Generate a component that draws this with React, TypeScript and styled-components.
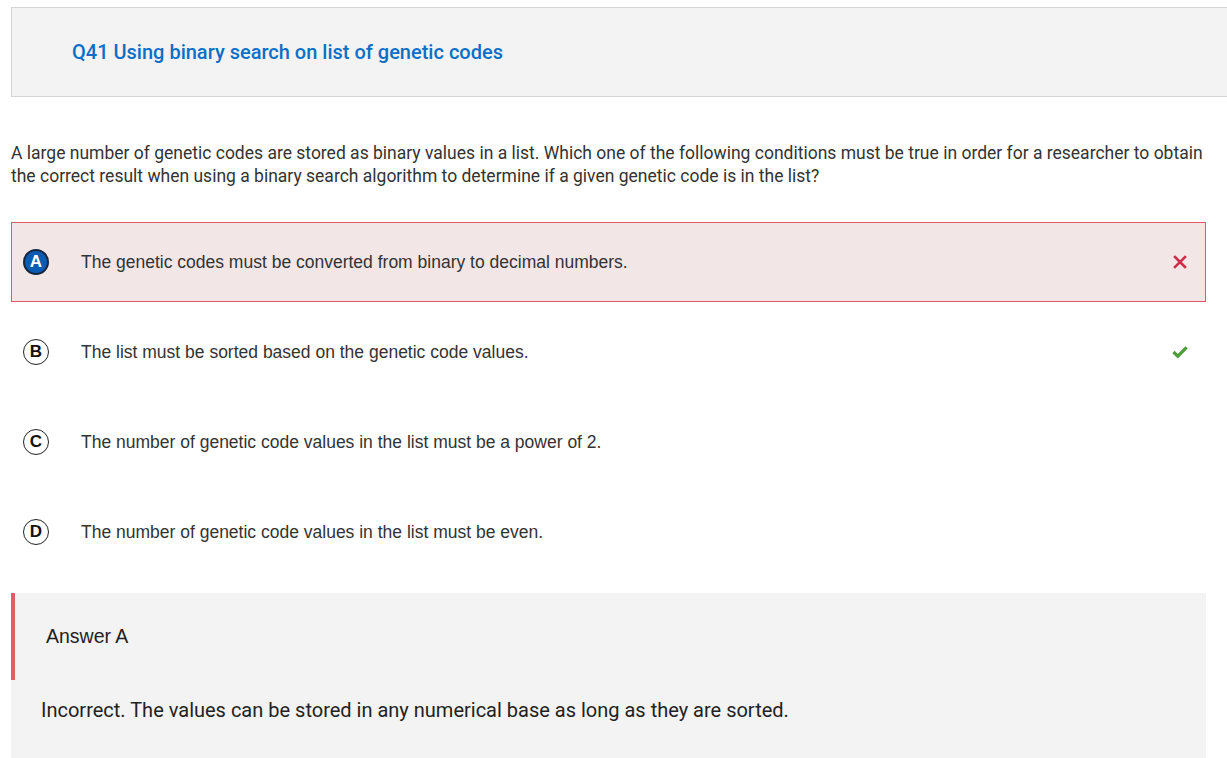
import React from "react";
import styled, { createGlobalStyle } from "styled-components";

const Global = createGlobalStyle`
  html, body { margin: 0; padding: 0; background: #fff; }
  body { font-family: Roboto, "Liberation Sans", sans-serif; overflow: hidden; }
`;

const Page = styled.div`
  padding: 7px 0 0 11px;
  width: 1227px;
  box-sizing: border-box;
`;

const Header = styled.div`
  height: 90px;
  box-sizing: border-box;
  margin-right: -4px;
  background: #f3f3f3;
  border: 1px solid #d4d4d4;
  display: flex;
  align-items: center;
  padding-left: 60px;
`;

const Title = styled.h2`
  margin: 0;
  font-family: Roboto, sans-serif;
  font-weight: 500;
  font-size: 20px;
  color: #0b6fc7;
`;

const Question = styled.p`
  margin: 45px 16px 34px 0;
  font-family: Roboto, sans-serif;
  font-size: 17.5px;
  line-height: 23px;
  color: #333;
`;

const Options = styled.div`
  width: 1195px;
  display: flex;
  flex-direction: column;
  gap: 10px;
`;

const Row = styled.div<{ $wrong?: boolean }>`
  height: 80px;
  box-sizing: border-box;
  display: flex;
  align-items: center;
  padding: 0 17px 0 11px;
  border: 1px solid ${(p) => (p.$wrong ? "#e6566a" : "transparent")};
  background: ${(p) => (p.$wrong ? "#f3e6e7" : "transparent")};
`;

const Letter = styled.span<{ $selected?: boolean }>`
  width: 26px;
  height: 26px;
  box-sizing: border-box;
  border-radius: 50%;
  display: inline-flex;
  align-items: center;
  justify-content: center;
  font-family: "Liberation Sans", Arial, sans-serif;
  font-weight: bold;
  font-size: 17px;
  flex: none;
  border: ${(p) => (p.$selected ? "2px solid #16263f" : "1.5px solid #222")};
  background: ${(p) => (p.$selected ? "#0a5cb3" : "#fff")};
  color: ${(p) => (p.$selected ? "#fff" : "#111")};
`;

const OptionText = styled.span`
  margin-left: 32px;
  flex: 1;
  font-family: "Liberation Sans", Arial, sans-serif;
  font-size: 17.5px;
  color: #333;
`;

const Mark = styled.span`
  width: 16px;
  display: inline-flex;
  justify-content: center;
`;

const AnswerBox = styled.div`
  margin-top: 21px;
  width: 1195px;
  background: #f3f3f3;
  padding-bottom: 40px;
`;

const AnswerHead = styled.div`
  height: 87px;
  border-left: 4px solid #e65a6a;
  display: flex;
  align-items: center;
  padding-left: 31px;
  font-family: "Liberation Sans", Arial, sans-serif;
  font-size: 19.5px;
  color: #222;
`;

const Explanation = styled.p`
  margin: 0;
  padding: 17px 0 0 30px;
  font-family: Roboto, sans-serif;
  font-size: 20px;
  line-height: 26px;
  color: #222;
`;

const Cross = () => (
  <svg width="14" height="14" viewBox="0 0 14 14">
    <path d="M2 2 L12 12 M12 2 L2 12" stroke="#d12d4a" strokeWidth="2.6" strokeLinecap="square" />
  </svg>
);

const Check = () => (
  <svg width="17" height="14" viewBox="0 0 17 14">
    <path d="M1.5 7 L6.2 11.5 L15.5 2.2" stroke="#4d9e3a" strokeWidth="3.4" fill="none" />
  </svg>
);

const options = [
  { l: "A", t: "The genetic codes must be converted from binary to decimal numbers.", wrong: true },
  { l: "B", t: "The list must be sorted based on the genetic code values.", correct: true },
  { l: "C", t: "The number of genetic code values in the list must be a power of 2." },
  { l: "D", t: "The number of genetic code values in the list must be even." },
];

export default function App() {
  return (
    <Page>
      <Global />
      <Header>
        <Title>Q41 Using binary search on list of genetic codes</Title>
      </Header>
      <Question>
        A large number of genetic codes are stored as binary values in a list. Which one of the following conditions must be true in order for a researcher to obtain the correct result when using a binary search algorithm to determine if a given genetic code is in the list?
      </Question>
      <Options>
        {options.map((o) => (
          <Row key={o.l} $wrong={o.wrong}>
            <Letter $selected={o.wrong}>{o.l}</Letter>
            <OptionText>{o.t}</OptionText>
            <Mark>{o.wrong ? <Cross /> : o.correct ? <Check /> : null}</Mark>
          </Row>
        ))}
      </Options>
      <AnswerBox>
        <AnswerHead>Answer A</AnswerHead>
        <Explanation>Incorrect. The values can be stored in any numerical base as long as they are sorted.</Explanation>
      </AnswerBox>
    </Page>
  );
}
